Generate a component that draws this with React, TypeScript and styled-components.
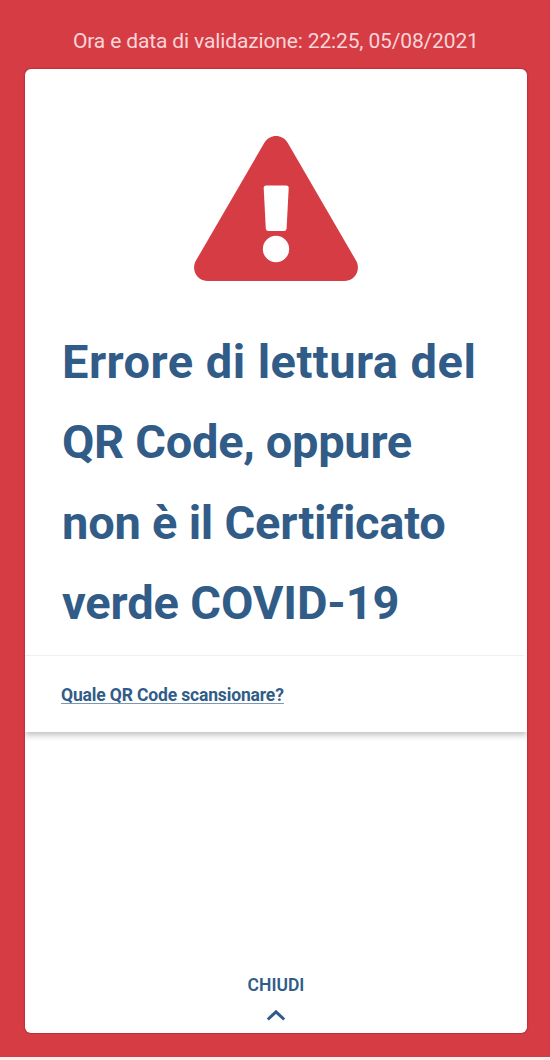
import React from "react";
import styled, { createGlobalStyle } from "styled-components";

const RED = "#d63c44";
const BLUE = "#315c88";

const GlobalStyle = createGlobalStyle`
  * { box-sizing: border-box; }
  body { margin: 0; background: #f6eeee; font-family: Roboto, "Liberation Sans", sans-serif; }
`;

const Screen = styled.main`
  height: 1057px;
  padding: 0 23px 24px 25px;
  background: ${RED};
  display: flex;
  flex-direction: column;
`;

const Line = styled.span<{ $spacing: number }>`
  display: block;
  white-space: nowrap;
  letter-spacing: ${(p) => p.$spacing}px;
`;

const Timestamp = styled.header`
  height: 69px;
  padding: 27px 0 0 48px;
  font-size: 21px;
  line-height: 28px;
  font-weight: 400;
  color: #f9d5d9;
`;

const Card = styled.section`
  flex: 1;
  display: flex;
  flex-direction: column;
  background: #fff;
  border-radius: 6px;
  box-shadow: 0 0 2px rgba(110, 10, 25, 0.7);
`;

const Panel = styled.div`
  height: 663px;
  border-radius: 6px 6px 0 0;
  box-shadow: 0 3px 6px rgba(0, 0, 0, 0.26);
  clip-path: inset(0 0 -14px 0);
`;

const Message = styled.div`
  height: 587px;
  padding-top: 66px;
  margin-right: 3px;
  border-bottom: 1px solid #f0f0f0;
`;

const WarningIcon = styled.svg`
  display: block;
  width: 166px;
  height: 147px;
  margin-left: 168px;
`;

const Title = styled.h1`
  margin: 39.5px 0 0 37px;
  font-size: 47px;
  line-height: 80.5px;
  font-weight: 700;
  color: ${BLUE};
`;

const HelpLink = styled.a`
  display: block;
  width: 223px;
  margin: 28px 0 0 36px;
  height: 20px;
  font-size: 17.5px;
  line-height: 23px;
  font-weight: 700;
  color: ${BLUE};
  text-decoration: none;
  border-bottom: 1px solid #7d98b4;
`;

const CloseButton = styled.button`
  margin: auto auto 12px;
  padding: 0;
  border: 0;
  background: none;
  display: flex;
  flex-direction: column;
  align-items: center;
  gap: 13px;
  font: 600 17.5px/22px Roboto, "Liberation Sans", sans-serif;
  color: ${BLUE};
`;

const titleLines = [
  { text: "Errore di lettura del", spacing: 0.46 },
  { text: "QR Code, oppure", spacing: -0.3 },
  { text: "non è il Certificato", spacing: -0.22 },
  { text: "verde COVID-19", spacing: -0.14 },
];

export default function App() {
  return (
    <>
      <GlobalStyle />
      <Screen>
        <Timestamp>
          <Line $spacing={-0.14}>Ora e data di validazione: 22:25, 05/08/2021</Line>
        </Timestamp>
        <Card>
          <Panel>
            <Message>
              <WarningIcon viewBox="0 0 166 147" aria-hidden="true">
                <path
                  fill={RED}
                  d="M71.5 7.5C76.7-1.3 89.3-1.3 94.5 7.5L163 125.5C168.2 134.5 162.3 146 152 146H14C3.7 146-2.2 134.5 3 125.5Z"
                />
                <path
                  fill="#fff"
                  d="M73.2 50.5H93.2Q95.8 50.5 95.7 53L93.6 93.5Q93.4 96 90.9 96H75.5Q73 96 72.8 93.5L70.7 53Q70.6 50.5 73.2 50.5Z"
                />
                <circle cx="83" cy="114" r="13.2" fill="#fff" />
              </WarningIcon>
              <Title>
                {titleLines.map((line) => (
                  <Line key={line.text} $spacing={line.spacing}>{line.text}</Line>
                ))}
              </Title>
            </Message>
            <HelpLink href="#">
              <Line $spacing={-0.15}>Quale QR Code scansionare?</Line>
            </HelpLink>
          </Panel>
          <CloseButton type="button">
            <Line $spacing={0}>CHIUDI</Line>
            <svg width="20" height="12" viewBox="0 0 20 12" aria-hidden="true">
              <path d="M1.8 10.5L10 2.8L18.2 10.5" fill="none" stroke={BLUE} strokeWidth="3" />
            </svg>
          </CloseButton>
        </Card>
      </Screen>
    </>
  );
}
